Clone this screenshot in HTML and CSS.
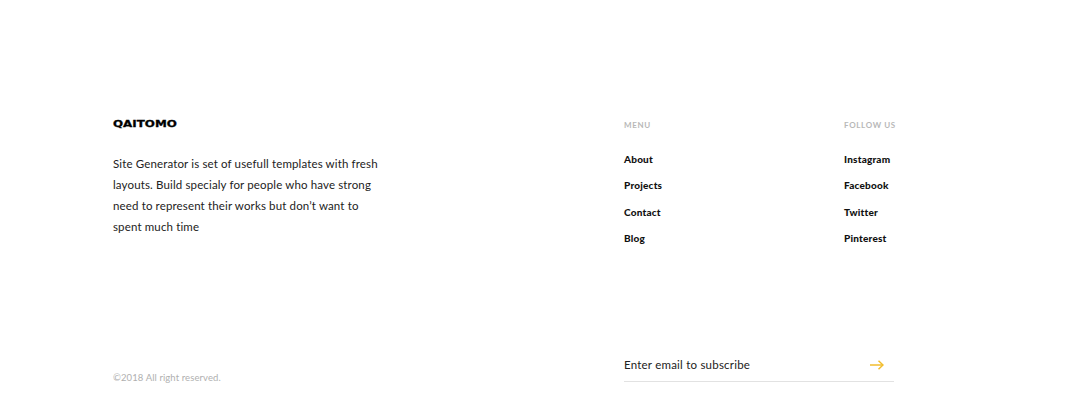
FILE: index.html
```html
<!DOCTYPE html>
<html lang="en">
<head>
    <meta charset="UTF-8">
    <title>Qaitomo</title>
    <link rel="stylesheet" href="styles.css">
</head>
<body>

    <footer class="footer">
        <div class="footer-top">
            <div class="about">
                <div class="logo">QAITOMO</div>
                <p class="about-text">Site Generator is set of usefull templates with fresh<br>layouts. Build specialy for people who have strong<br>need to represent their works but don’t want to<br>spent much time</p>
            </div>
            <div class="links links-menu">
                <h4>MENU</h4>
                <a href="#">About</a>
                <a href="#">Projects</a>
                <a href="#">Contact</a>
                <a href="#">Blog</a>
            </div>
            <div class="links links-follow">
                <h4>FOLLOW US</h4>
                <a href="#">Instagram</a>
                <a href="#">Facebook</a>
                <a href="#">Twitter</a>
                <a href="#">Pinterest</a>
            </div>
        </div>
        <div class="footer-bottom">
            <div class="copyright">©2018 All right reserved.</div>
            <form class="subscribe">
                <span class="subscribe-label">Enter email to subscribe</span>
                <svg class="arrow" width="14" height="10" viewBox="0 0 14 10" fill="none" stroke="#f2bd2c" stroke-width="1.5">
                    <path d="M0 5H13"/>
                    <path d="M8.5 0.7L13 5L8.5 9.3"/>
                </svg>
            </form>
        </div>
    </footer>

</body>
</html>
```

FILE: styles.css
```css
body {
    margin: 0;
    background: #fff;
    font-family: Lato, Arial, sans-serif;
    color: #111;
}
.footer {
    height: 413px;
    box-sizing: border-box;
    padding: 116px 186px 31px 113px;
    display: flex;
    flex-direction: column;
    justify-content: space-between;
}
.footer-top {
    display: flex;
}
.about {
    flex: none;
    width: 511px;
}
.logo {
    font-family: "DejaVu Sans", sans-serif;
    font-weight: bold;
    font-size: 9.5px;
    line-height: 14px;
    margin-top: 1px;
    color: #000;
    -webkit-text-stroke: 0.3px #000;
    transform: scaleX(1.25);
    transform-origin: left;
}
.about-text {
    margin: 22px 0 0;
    font-size: 11.5px;
    line-height: 21.1px;
    letter-spacing: 0.14px;
    color: #222;
}
.links {
    flex: none;
    display: flex;
    flex-direction: column;
}
.links-menu {
    width: 220px;
}
.links-follow {
    width: 60px;
}
.links h4 {
    margin: 3px 0 15px;
    font-size: 8px;
    line-height: 12px;
    font-weight: 700;
    letter-spacing: 0.65px;
    white-space: nowrap;
    color: #b8b8b8;
}
.links a {
    font-size: 10px;
    line-height: 26.4px;
    font-weight: 900;
    letter-spacing: 0.2px;
    color: #111;
    text-decoration: none;
}
.footer-bottom {
    display: flex;
    align-items: flex-end;
    justify-content: space-between;
}
.copyright {
    font-size: 9.5px;
    line-height: 14px;
    letter-spacing: 0.1px;
    color: #b0b0b0;
    margin-bottom: -3px;
}
.subscribe {
    width: 270px;
    display: flex;
    align-items: center;
    justify-content: space-between;
    padding-bottom: 8px;
    border-bottom: 1px solid #e2e2e2;
}
.subscribe-label {
    font-size: 11.5px;
    line-height: 16px;
    letter-spacing: 0.22px;
    color: #222;
}
.arrow {
    margin-right: 10px;
}
```
